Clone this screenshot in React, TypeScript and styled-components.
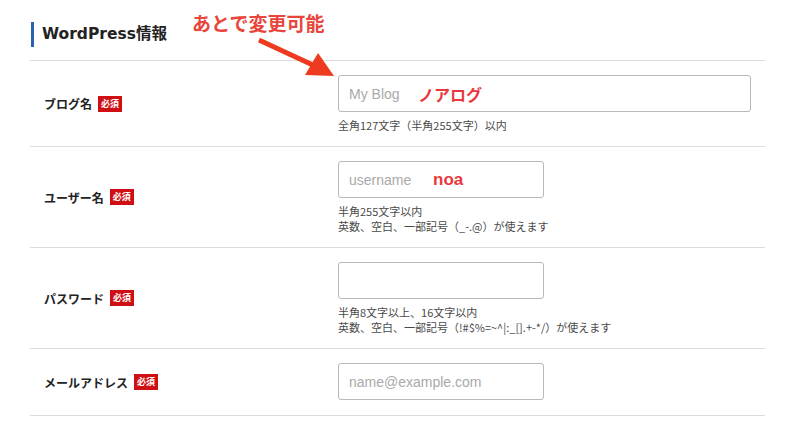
import styled, { createGlobalStyle } from 'styled-components';

const GlobalStyle = createGlobalStyle`
  body {
    margin: 0;
    background: #ffffff;
    font-family: 'Noto Sans CJK JP', sans-serif;
    color: #222;
  }
`;

type FieldRow = {
  label: string;
  placeholder: string;
  wide?: boolean;
  note?: string;
  noteLeft?: number;
  noteLatin?: boolean;
  hints: string[];
};

const rows: FieldRow[] = [
  {
    label: 'ブログ名',
    placeholder: 'My Blog',
    wide: true,
    note: 'ノアログ',
    noteLeft: 80,
    hints: ['全角127文字（半角255文字）以内'],
  },
  {
    label: 'ユーザー名',
    placeholder: 'username',
    note: 'noa',
    noteLeft: 95,
    noteLatin: true,
    hints: ['半角255文字以内', '英数、空白、一部記号（_-.@）が使えます'],
  },
  {
    label: 'パスワード',
    placeholder: '',
    hints: ['半角8文字以上、16文字以内', '英数、空白、一部記号（!#$%=~^|:_[].+-*/）が使えます'],
  },
  {
    label: 'メールアドレス',
    placeholder: 'name@example.com',
    hints: [],
  },
];

function App() {
  return (
    <>
      <GlobalStyle />
      <Page>
        <Header>
          <Title>WordPress情報</Title>
          <Annotation>あとで変更可能</Annotation>
          <Arrow width="90" height="50" viewBox="0 0 90 50">
            <line x1="4" y1="6" x2="60" y2="32" stroke="#ee3b1f" strokeWidth="5" />
            <polygon points="50,41 63,19 79,42" fill="#ee3b1f" />
          </Arrow>
        </Header>
        {rows.map((row) => (
          <Row key={row.label}>
            <LabelCell>
              <Label>{row.label}</Label>
              <Badge>必須</Badge>
            </LabelCell>
            <InputCell $last={row.hints.length === 0}>
              <Field $wide={row.wide}>
                <Input placeholder={row.placeholder} />
                {row.note && (
                  <Note $left={row.noteLeft ?? 0} $latin={row.noteLatin}>
                    {row.note}
                  </Note>
                )}
              </Field>
              {row.hints.length > 0 && (
                <Hints>
                  {row.hints.map((h) => (
                    <div key={h}>{h}</div>
                  ))}
                </Hints>
              )}
            </InputCell>
          </Row>
        ))}
      </Page>
    </>
  );
}

export default App;

const Page = styled.div`
  margin: 0 35px 0 30px;
`;

const Header = styled.div`
  position: relative;
  box-sizing: border-box;
  height: 61px;
  padding-top: 22px;
  border-bottom: 1px solid #dcdcdc;
  display: flex;
  align-items: flex-start;
`;

const Title = styled.h2`
  margin: 0 0 0 1px;
  padding-left: 8px;
  border-left: 3px solid #2a62ad;
  font-family: 'DejaVu Sans', 'Noto Sans CJK JP', sans-serif;
  font-size: 15.5px;
  font-weight: 700;
  line-height: 25px;
  color: #222;
`;

const Annotation = styled.div`
  position: absolute;
  left: 162px;
  top: 9px;
  font-family: 'Noto Sans CJK JP', sans-serif;
  font-size: 19px;
  font-weight: 700;
  line-height: 27px;
  color: #e8453c;
`;

const Arrow = styled.svg`
  position: absolute;
  left: 225px;
  top: 34px;
  z-index: 2;
`;

const Row = styled.div`
  display: flex;
  border-bottom: 1px solid #dcdcdc;
`;

const LabelCell = styled.div`
  box-sizing: border-box;
  width: 308px;
  padding-left: 14px;
  display: flex;
  align-items: center;
`;

const Label = styled.span`
  font-size: 12px;
  font-weight: 700;
  color: #222;
`;

const Badge = styled.span`
  margin-left: 6px;
  background: #d00f14;
  color: #fff;
  font-size: 9px;
  font-weight: 700;
  line-height: 16px;
  padding: 0 3px;
`;

const InputCell = styled.div<{ $last?: boolean }>`
  padding: 14px 0 ${(p) => (p.$last ? '15px' : '13px')};
`;

const Field = styled.div<{ $wide?: boolean }>`
  position: relative;
  width: ${(p) => (p.$wide ? '413px' : '206px')};
  height: 37px;
`;

const Input = styled.input`
  box-sizing: border-box;
  width: 100%;
  height: 100%;
  margin: 0;
  padding: 0 10px;
  border: 1px solid #b8b8b8;
  border-radius: 3px;
  background: #fff;
  font-family: 'Liberation Sans', Arial, sans-serif;
  font-size: 14px;
  color: #333;
  outline: none;

  &::placeholder {
    color: #a9a9a9;
  }
`;

const Note = styled.span<{ $left: number; $latin?: boolean }>`
  position: absolute;
  left: ${(p) => p.$left}px;
  top: 50%;
  transform: translateY(-50%);
  font-family: ${(p) =>
    p.$latin ? "'Liberation Sans', Arial, sans-serif" : "'Noto Sans CJK JP', sans-serif"};
  font-size: ${(p) => (p.$latin ? '17px' : '16px')};
  font-weight: 700;
  color: #e8383d;
  pointer-events: none;
`;

const Hints = styled.div`
  margin-top: 6px;
  font-size: 11px;
  line-height: 15px;
  color: #4a4a4a;
`;
